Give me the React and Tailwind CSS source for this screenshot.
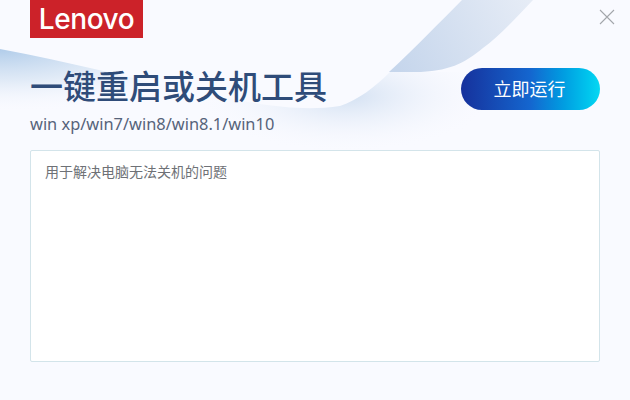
import React from "react";

const curve = "M0 49C70 62 130 78 200 93C260 105 300 112 340 106C358 100 375 87 390 72H480V170H0Z";

const Waves = () => (
  <svg className="absolute left-0 top-0" width="630" height="170" viewBox="0 0 630 170" fill="none">
    <defs>
      <linearGradient id="ribbon" x1="400" y1="72" x2="530" y2="0" gradientUnits="userSpaceOnUse">
        <stop offset="0" stopColor="#c6d6ec" />
        <stop offset="1" stopColor="#e6ecf6" />
      </linearGradient>
      <radialGradient id="leftGlow" cx="0" cy="0" r="1" gradientUnits="userSpaceOnUse" gradientTransform="translate(0 50) scale(240 62)">
        <stop offset="0" stopColor="#b2cdea" />
        <stop offset="0.5" stopColor="#dbe7f5" stopOpacity="0.8" />
        <stop offset="1" stopColor="#f9faff" stopOpacity="0" />
      </radialGradient>
      <radialGradient id="rightGlow" cx="0" cy="0" r="1" gradientUnits="userSpaceOnUse" gradientTransform="translate(345 96) scale(150 56)">
        <stop offset="0" stopColor="#d2e0f2" />
        <stop offset="1" stopColor="#f9faff" stopOpacity="0" />
      </radialGradient>
    </defs>
    <path d={curve} fill="url(#leftGlow)" />
    <path d={curve} fill="url(#rightGlow)" />
    <path d="M462 0H533C512 22 498 37 483 48C465 63 448 72 415 72H389C415 48 440 22 462 0Z" fill="url(#ribbon)" />
  </svg>
);

export default function App() {
  return (
    <div
      className="relative h-[400px] w-[630px] overflow-hidden bg-[#f9faff]"
      style={{ fontFamily: '"Noto Sans", "Noto Sans CJK SC", sans-serif' }}
    >
      <Waves />

      <button className="absolute right-[15px] top-[9px] text-[#a3a6ab]">
        <svg width="16" height="16" viewBox="0 0 16 16" stroke="currentColor" strokeWidth="1.1">
          <path d="M1 1L15 15M15 1L1 15" />
        </svg>
      </button>

      <div className="relative flex h-full flex-col px-[30px] pb-[38px]">
        <div className="flex h-[38px] w-[113px] items-center justify-center bg-[#cc2229] font-['Inter'] text-[28px] font-medium tracking-[-0.4px] text-white">
          Lenovo
        </div>

        <div className="mt-[26px] flex items-start justify-between">
          <div>
            <h1 className="text-[33px] leading-[46px] font-medium whitespace-nowrap text-[#2f4c79]">
              一键重启或关机工具
            </h1>
            <p className="mt-[2px] text-[16.4px] leading-[24px] text-[#56637a]">
              win xp/win7/win8/win8.1/win10
            </p>
          </div>
          <button className="mt-[4px] h-[42px] w-[139px] rounded-full bg-linear-to-r from-[#16319c] via-[#1466cf] to-[#07d8f2] pr-[2px] text-[18px] text-white">
            立即运行
          </button>
        </div>

        <div className="mt-[14px] flex-1 rounded-[2px] border border-[#d3e4ea] bg-white px-[14px] py-[11px] text-[14px] leading-[20px] text-[#6e7176]">
          用于解决电脑无法关机的问题
        </div>
      </div>
    </div>
  );
}
